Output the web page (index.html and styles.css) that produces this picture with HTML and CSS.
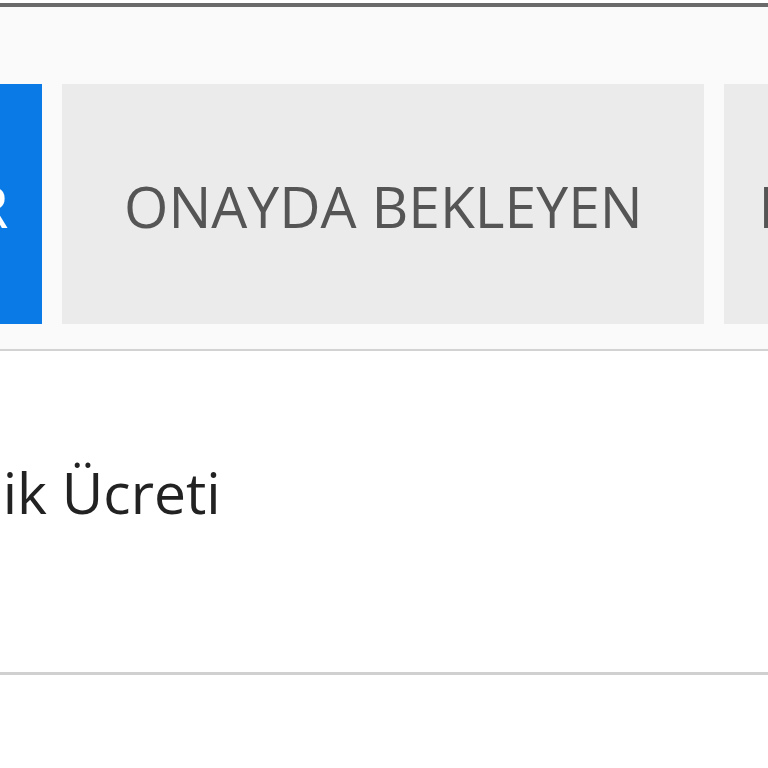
FILE: index.html
```html
<!DOCTYPE html>
<html lang="tr">
<head>
    <meta charset="UTF-8">
    <meta name="viewport" content="width=device-width, initial-scale=1.0">
    <title>Talepler</title>
    <link rel="stylesheet" href="styles.css">
</head>
<body>
    <div class="status-edge"></div>

    <div class="tab-bar">
        <div class="tab-strip">
            <div class="tab active">ONAYLANAN TALEPLER</div>
            <div class="tab">ONAYDA BEKLEYEN</div>
            <div class="tab">REDDEDİLEN TALEPLER</div>
        </div>
    </div>

    <div class="list">
        <div class="list-item">
            <span class="item-title">Temizlik Ücreti</span>
        </div>
    </div>
</body>
</html>
```

FILE: styles.css
```css
body {
    margin: 0;
    font-family: 'Open Sans', 'Noto Sans', sans-serif;
    background: #ffffff;
    overflow: hidden;
}

.status-edge {
    margin-top: 3px;
    height: 4px;
    background: #6a6a6a;
    box-shadow: 0 1px 1px rgba(0,0,0,0.15);
}

.tab-bar {
    background: #fafafa;
    padding: 77px 0 25px;
    border-bottom: 2px solid #d2d2d2;
    overflow: hidden;
}

.tab-strip {
    display: flex;
    gap: 20px;
    margin-left: -643px;
}

.tab {
    flex: none;
    min-width: 642px;
    height: 240px;
    padding: 4px 34px 0;
    box-sizing: border-box;
    display: flex;
    align-items: center;
    justify-content: center;
    background: #ebebeb;
    color: #555555;
    font-size: 57px;
    white-space: nowrap;
}

.tab.active {
    background: #0a7be6;
    color: #ffffff;
}

.list-item {
    padding: 102px 0 0;
    height: 324px;
    box-sizing: border-box;
    border-bottom: 3px solid #d0d0d0;
    overflow: hidden;
}

.item-title {
    display: block;
    margin-left: -169px;
    font-size: 57px;
    color: #222222;
    white-space: nowrap;
}
```
